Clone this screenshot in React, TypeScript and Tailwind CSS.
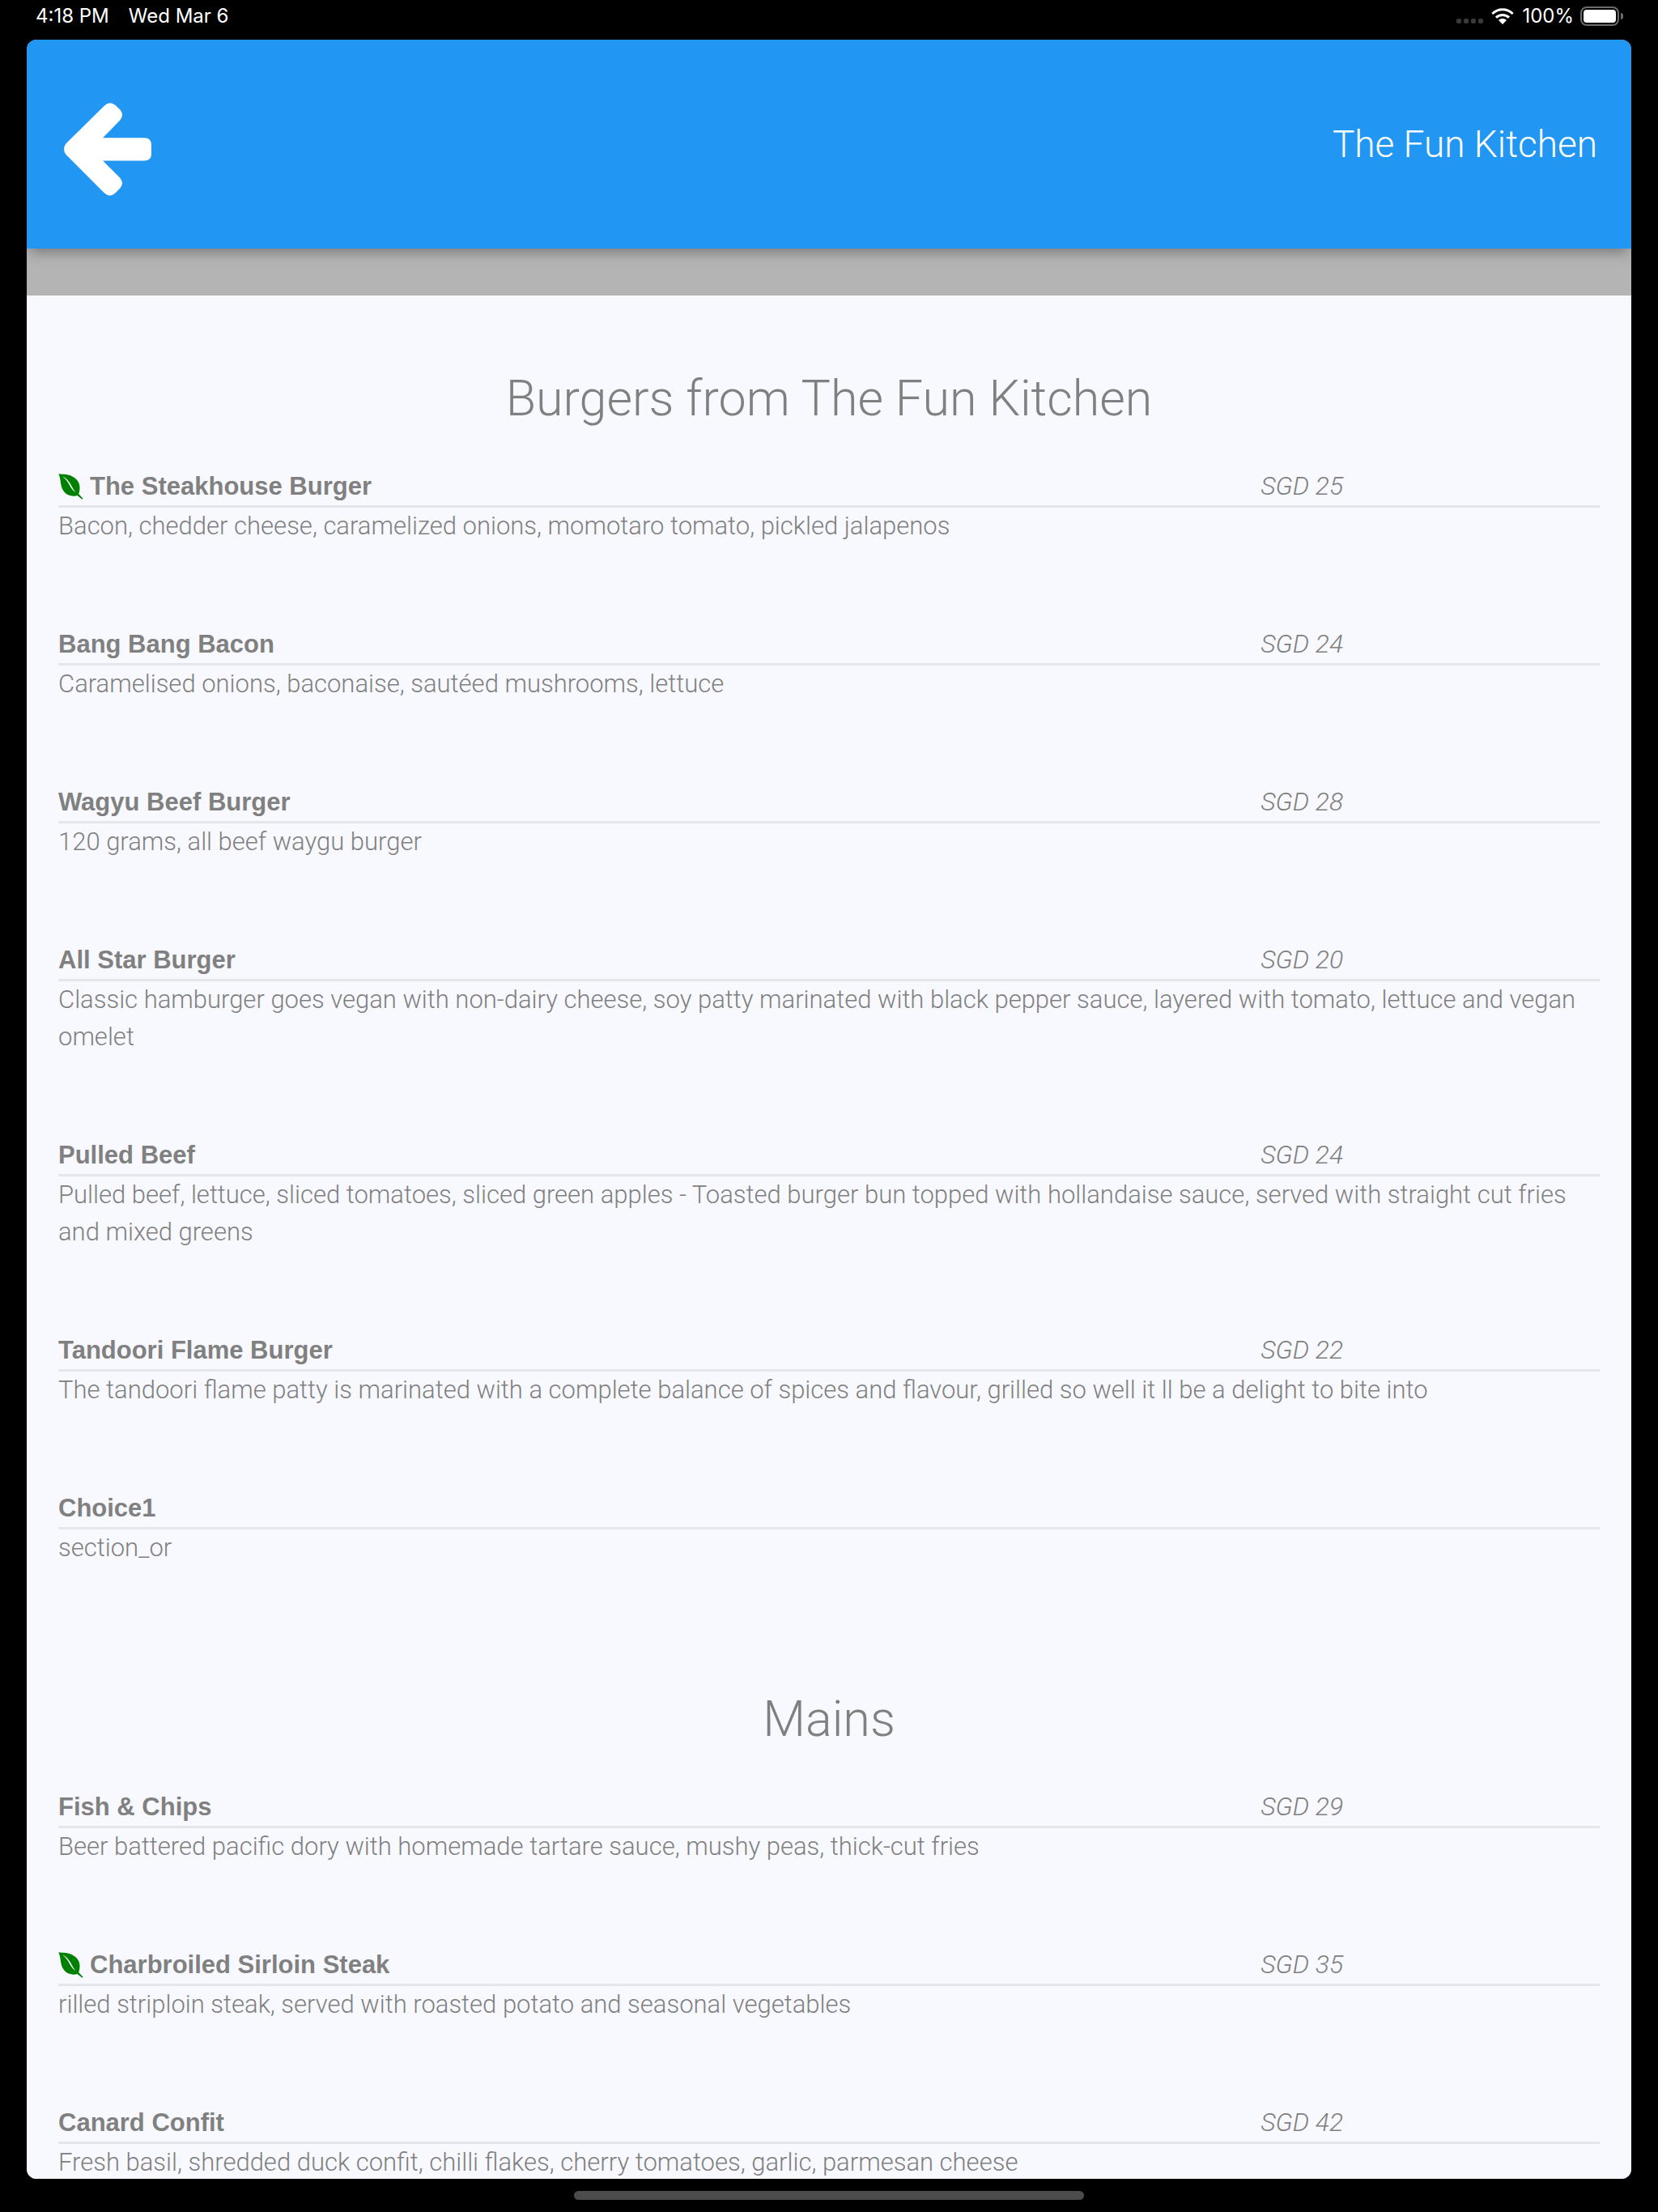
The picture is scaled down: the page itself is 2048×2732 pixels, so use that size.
type MenuItem = { name: string; price?: string; description: string; veg?: boolean };
type MenuSection = { title: string; items: MenuItem[] };

const sections: MenuSection[] = [
  {
    title: "Burgers from The Fun Kitchen",
    items: [
      { name: "The Steakhouse Burger", price: "SGD 25", veg: true, description: "Bacon, chedder cheese, caramelized onions, momotaro tomato, pickled jalapenos" },
      { name: "Bang Bang Bacon", price: "SGD 24", description: "Caramelised onions, baconaise, sautéed mushrooms, lettuce" },
      { name: "Wagyu Beef Burger", price: "SGD 28", description: "120 grams, all beef waygu burger" },
      { name: "All Star Burger", price: "SGD 20", description: "Classic hamburger goes vegan with non-dairy cheese, soy patty marinated with black pepper sauce, layered with tomato, lettuce and vegan omelet" },
      { name: "Pulled Beef", price: "SGD 24", description: "Pulled beef, lettuce, sliced tomatoes, sliced green apples - Toasted burger bun topped with hollandaise sauce, served with straight cut fries and mixed greens" },
      { name: "Tandoori Flame Burger", price: "SGD 22", description: "The tandoori flame patty is marinated with a complete balance of spices and flavour, grilled so well it ll be a delight to bite into" },
      { name: "Choice1", description: "section_or" },
    ],
  },
  {
    title: "Mains",
    items: [
      { name: "Fish & Chips", price: "SGD 29", description: "Beer battered pacific dory with homemade tartare sauce, mushy peas, thick-cut fries" },
      { name: "Charbroiled Sirloin Steak", price: "SGD 35", veg: true, description: "rilled striploin steak, served with roasted potato and seasonal vegetables" },
      { name: "Canard Confit", price: "SGD 42", description: "Fresh basil, shredded duck confit, chilli flakes, cherry tomatoes, garlic, parmesan cheese" },
    ],
  },
];

function BackArrow() {
  return (
    <svg viewBox="0 0 324 344" className="h-[115px] w-[108px]" fill="currentColor" aria-hidden="true">
      <path d="M7 151 L150 10 Q170 -9 190 8 L208 25 Q224 44 208 64 L144 129 H298 Q324 129 324 155 V188 Q324 214 298 214 H144 L208 278 Q224 298 208 316 L190 334 Q170 352 150 334 L7 191 Q-7 171 7 151 Z" />
    </svg>
  );
}

function Leaf() {
  return (
    <svg viewBox="0 0 92 96" className="h-8 w-[31px] shrink-0" role="img" aria-label="Vegetarian">
      <path
        fill="#008000"
        d="M0 1 C20 3 38 2 54 12 C72 22 79 36 79 52 C79 62 77 70 75 75 L91 92 L88 95 L70 81 C62 84 52 84 44 81 C28 78 18 66 12 50 C7 34 8 14 0 1 Z"
      />
      <path fill="#f8f9ff" d="M15 10 C34 19 44 36 52 52 C56 60 60 65 64 69 C56 65 50 58 44 48 C36 33 28 20 15 10 Z" />
    </svg>
  );
}

function Wifi() {
  return (
    <svg viewBox="0 0 84 60" className="h-5 w-7" aria-label="Wi-Fi" role="img">
      <g fill="none" stroke="#fff" strokeWidth="9">
        <path d="M4 21 C25 0 59 0 80 21" />
        <path d="M18 35 C31 22 53 22 66 35" />
      </g>
      <path fill="#fff" d="M27 45 C35 37 49 37 57 45 L42 60 Z" />
    </svg>
  );
}

function Battery() {
  return (
    <div className="flex items-center gap-[2px]" role="img" aria-label="Battery full">
      <div className="h-6 w-12 rounded-[8px] border-2 border-[#6b6b6b] p-[2px]">
        <div className="h-full w-full rounded-[4px] bg-white" />
      </div>
      <div className="h-2 w-[3px] rounded-r-full bg-[#6b6b6b]" />
    </div>
  );
}

function StatusBar() {
  return (
    <div className="flex h-[49px] shrink-0 items-center justify-between pb-[10px] pl-11 pr-[43px] font-['Inter',sans-serif] text-[24px] leading-8 text-white">
      <div className="flex gap-6">
        <span>4:18 PM</span>
        <span>Wed Mar 6</span>
      </div>
      <div className="flex items-center">
        <div className="mr-[10px] flex gap-[3px] pt-[13px]">
          {[0, 1, 2, 3].map((i) => (
            <span key={i} className="size-[6px] rounded-[2px] bg-[#3a3a3a]" />
          ))}
        </div>
        <Wifi />
        <span className="ml-[10px] mr-2">100%</span>
        <Battery />
      </div>
    </div>
  );
}

function MenuRow({ item }: { item: MenuItem }) {
  return (
    <li className="mb-[99px]">
      <div className="flex border-b-[3px] border-[#e6e6ea] leading-[47px]">
        <h3 className="flex flex-1 items-center gap-2 font-['Liberation_Sans',sans-serif] font-bold">
          {item.veg && <Leaf />}
          {item.name}
        </h3>
        <span className="w-[22%] text-[32px] leading-[47px] italic">{item.price}</span>
      </div>
      <p className="leading-[46px]">{item.description}</p>
    </li>
  );
}

export default function App() {
  return (
    <div className="flex h-screen flex-col bg-black">
      <StatusBar />
      <div className="mx-[33px] flex min-h-0 flex-1 flex-col overflow-hidden rounded-xl bg-[#b4b4b4] font-['Roboto',sans-serif] font-light">
        <header className="relative flex h-[258px] shrink-0 items-center justify-between bg-[#2196f3] pl-[46px] pr-[42px] text-white shadow-[0_8px_16px_-4px_rgba(0,0,0,0.35)]">
          <button type="button" aria-label="Back" className="pt-3">
            <BackArrow />
          </button>
          <h1 className="text-[46px] leading-[64px]">The Fun Kitchen</h1>
        </header>
        <main className="mt-[58px] min-h-0 flex-1 overflow-hidden bg-[#f8f9ff] px-[39px] pt-[38px] text-[31px] text-[#808080]">
          {sections.map((section) => (
            <section key={section.title} className="pt-[43px]">
              <h2 className="mb-[39px] text-center text-[61px] leading-[92px]">{section.title}</h2>
              <ul>
                {section.items.map((item) => (
                  <MenuRow key={item.name} item={item} />
                ))}
              </ul>
            </section>
          ))}
        </main>
      </div>
      <div className="flex h-[41px] shrink-0 items-center justify-center">
        <div className="h-[11px] w-[630px] max-w-full rounded-full bg-[#4c4c4c]" />
      </div>
    </div>
  );
}
